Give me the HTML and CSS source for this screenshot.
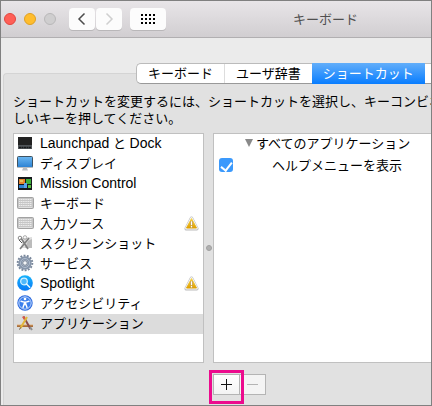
FILE: index.html
```html
<!DOCTYPE html>
<html lang="ja">
<head>
<meta charset="utf-8">
<title>キーボード</title>
<link rel="stylesheet" href="styles.css">
</head>
<body>
<svg class="defs" aria-hidden="true">
  <defs>
    <linearGradient id="blue" x2="0" y2="1"><stop stop-color="#6cb8f2"/><stop offset="1" stop-color="#2980d2"/></linearGradient>
    <linearGradient id="spot" x2="0" y2="1"><stop stop-color="#18b4fc"/><stop offset="1" stop-color="#0878f4"/></linearGradient>
    <linearGradient id="gold" x2="0" y2="1"><stop stop-color="#f8d548"/><stop offset="1" stop-color="#dfa000"/></linearGradient>
    <symbol id="keys" viewBox="0 0 18 18">
      <rect x="1.500" y="3.500" width="16" height="11" rx="1" fill="#c6c6c6" stroke="#a2a2a2"/>
      <path d="M3 5.500h13M3 7.500h13M3 9.500h13M3 11.500h13" stroke="#ececec" stroke-dasharray="1.300 .5"/>
      <path d="M3 13.500h13" stroke="#dedede"/>
    </symbol>
    <symbol id="warning" viewBox="0 0 16 16">
      <path d="M8 2.700L13.500 13.500h-11z" fill="#bbb" stroke="#bbb" stroke-width="4" stroke-linejoin="round"/>
      <path d="M8 2.700L13.300 13H2.700z" fill="#f4f4f4" stroke="#f4f4f4" stroke-width="3" stroke-linejoin="round"/>
      <path d="M8 2.700L13.300 12.800H2.700z" fill="url(#gold)" stroke="url(#gold)" stroke-linejoin="round"/>
      <path d="M8 5.500v4M8 10.500v1.700" stroke="#ad7500" stroke-width="3"/>
      <path d="M8 5.500v4M8 10.500v1.700" stroke="#fff" stroke-width="1.800"/>
    </symbol>
  </defs>
</svg>
<div class="window">
  <header class="titlebar">
    <div class="lights">
      <button class="light close" aria-label="閉じる"></button>
      <button class="light minimize" aria-label="しまう"></button>
      <button class="light" aria-label="拡大" disabled></button>
    </div>
    <nav class="history">
      <button class="tool" aria-label="戻る"><svg width="10" height="14" viewBox="0 0 10 14"><path d="M7.500 1.500L2 7l5.500 5.500" fill="none" stroke="#4c4c4c" stroke-width="1.500"/></svg></button>
      <button class="tool" aria-label="進む" disabled><svg width="10" height="14" viewBox="0 0 10 14"><path d="M2.500 1.500L8 7l-5.500 5.500" fill="none" stroke="#cfcfcf" stroke-width="1.500"/></svg></button>
    </nav>
    <button class="tool all" aria-label="すべてを表示"><svg width="14" height="10" viewBox="0 0 14 10"><path d="M0 1h14M0 5h14M0 9h14" stroke="#000" stroke-width="2" stroke-dasharray="2 2"/></svg></button>
    <h1 class="title">キーボード</h1>
  </header>
  <main class="content">
    <div class="tabs" role="tablist">
      <button class="tab" role="tab">キーボード</button>
      <button class="tab" role="tab">ユーザ辞書</button>
      <button class="tab selected" role="tab" aria-selected="true">ショートカット</button>
      <button class="tab rest" role="tab" aria-label="入力ソース"></button>
    </div>
    <section class="panel">
      <p class="intro">ショートカットを変更するには、ショートカットを選択し、キーコンビネ<br>しいキーを押してください。</p>
      <div class="split">
        <ul class="list categories">
          <li><button class="row">
            <svg class="icon" viewBox="0 0 18 18"><path d="M2 3h14v9H2z" fill="#222"/><path d="M2 11h14v4H2z" fill="#505458"/><path d="M3 13.500h12" stroke="#17191b" stroke-width="1.500" stroke-dasharray="2 .5"/></svg>
            <span><span class="latin">Launchpad</span> と <span class="latin">Dock</span></span></button></li>
          <li><button class="row">
            <svg class="icon" viewBox="0 0 18 18"><path d="M7 14h4l1 2.500H6z" fill="#b9bdc1"/><rect x="1.500" y="2.500" width="15" height="11" rx="1" fill="url(#blue)" stroke="#3f5361"/><path d="M2 13.500h14" stroke="#b9bdc1"/></svg>
            <span>ディスプレイ</span></button></li>
          <li><button class="row">
            <svg class="icon" viewBox="0 0 18 18"><path d="M2 3h14v13H2z" fill="#15191d"/><path d="M3 5h6v5H3z" fill="#e68430"/><path d="M4 6h3v2H4z" fill="#e6c05d"/><path d="M10 5h5v5h-5z" fill="#3cae39"/><path d="M3 11h5v3H3z" fill="#2e83d4"/><path d="M8 9h3v5H8z" fill="#58a5ed"/><path d="M12 11h3v3h-3z" fill="#58c13f"/></svg>
            <span class="latin">Mission Control</span></button></li>
          <li><button class="row"><svg class="icon"><use href="#keys"/></svg><span>キーボード</span></button></li>
          <li><button class="row"><svg class="icon"><use href="#keys"/></svg><span>入力ソース</span><svg class="alert" role="img" aria-label="警告"><use href="#warning"/></svg></button></li>
          <li><button class="row">
            <svg class="icon" viewBox="0 0 18 18"><path d="M7 4l9-1v11H5z" fill="#dedede"/><path d="M12 7l4-2v9H9z" fill="#bcbcbc"/><path d="M4 15L13 4M12 15L5 4" stroke="#808080" stroke-width="1.700"/><circle cx="4" cy="4" r="1.800" fill="none" stroke="#888"/><circle cx="9" cy="3.500" r="1.800" fill="none" stroke="#aaa"/><path d="M3 6l3 3" stroke="#555"/></svg>
            <span>スクリーンショット</span></button></li>
          <li><button class="row">
            <svg class="icon" viewBox="0 0 18 18"><circle cx="9" cy="9" r="7.300" fill="none" stroke="#78869a" stroke-width="2" stroke-dasharray="1.900 1.375"/><circle cx="9" cy="9" r="4.700" fill="none" stroke="#8695aa" stroke-width="4"/><circle cx="9" cy="9" r="4.500" fill="none" stroke="#b0bdce"/><circle cx="9" cy="9" r="2.300" fill="#f4f6f8" stroke="#6c7b90"/></svg>
            <span>サービス</span></button></li>
          <li><button class="row">
            <svg class="icon" viewBox="0 0 18 18"><circle cx="9" cy="9" r="7.800" fill="url(#spot)"/><circle cx="8" cy="7.500" r="3.300" fill="#4fb8fb" stroke="#d5f2ff" stroke-width="1.200"/><path d="M10.500 10l3.200 3.300" stroke="#e7f8ff" stroke-width="1.500" stroke-linecap="round"/></svg>
            <span class="latin">Spotlight</span><svg class="alert" role="img" aria-label="警告"><use href="#warning"/></svg></button></li>
          <li><button class="row">
            <svg class="icon" viewBox="0 0 18 18"><circle cx="9" cy="9" r="7.700" fill="#2867dd"/><circle cx="9" cy="9" r="6.200" fill="#3c80ec" stroke="#c5dcff"/><circle cx="9" cy="5" r="1.300" fill="#fff"/><path d="M5 7.300l3 .8h2l3-.8M9 8v2.500M8.300 9.500L7 13.500M9.700 9.500L11 13.500" fill="none" stroke="#fff" stroke-width="1.400" stroke-linecap="round"/></svg>
            <span>アクセシビリティ</span></button></li>
          <li><button class="row current" aria-current="true">
            <svg class="icon" viewBox="0 0 18 18"><path d="M1 11h16v2H1z" fill="#a86d39"/><path d="M1 11h16" stroke="#dfaa70" stroke-width=".8"/><path d="M7.500 2.500L14.500 15" stroke="#8a4d4a" stroke-width="2"/><path d="M7 2.500l2.500 4" stroke="#d65949" stroke-width="2"/><path d="M11 3L4.500 14" stroke="#e2b73c" stroke-width="2"/><path d="M4.700 13.500l-1.200 2" stroke="#695035"/><path d="M14 13l2 3" stroke="#909090" stroke-width="2"/></svg>
            <span>アプリケーション</span></button></li>
        </ul>
        <div class="divider"><span class="knob"></span></div>
        <div class="list shortcuts">
          <div class="group"><svg width="8" height="8" viewBox="0 0 8 8"><path d="M0 0h8L4 8z" fill="#898989"/></svg><span>すべてのアプリケーション</span></div>
          <label class="shortcut"><input class="check" type="checkbox" checked><span>ヘルプメニューを表示</span></label>
        </div>
      </div>
      <div class="actions">
        <span class="highlight"><button class="action" aria-label="追加"><svg width="11" height="11" viewBox="0 0 11 11"><path d="M0 5.500h11M5.500 0v11" stroke="#111"/></svg></button></span>
        <button class="action remove" aria-label="削除" disabled><svg width="11" height="11" viewBox="0 0 11 11"><path d="M0 5.500h11" stroke="#b4b4b4"/></svg></button>
      </div>
    </section>
  </main>
</div>
</body>
</html>
```
FILE: styles.css
```css
* {
  box-sizing: border-box;
}

body {
  margin: 0;
  font: 13px/17px "Liberation Sans", "Noto Sans CJK JP", sans-serif;
  color: #000;
}

button {
  margin: 0;
  padding: 0;
  border: 0;
  font: inherit;
  color: inherit;
}

svg {
  display: block;
  flex: none;
}

.defs {
  position: absolute;
  width: 0;
  height: 0;
}

.window {
  display: flex;
  flex-direction: column;
  min-height: 100vh;
  border: 1px solid #808080;
  background: #ebebeb;
  overflow: hidden;
}

.titlebar {
  display: flex;
  align-items: center;
  height: 37px;
  padding-left: 3px;
  border-bottom: 1px solid #b1afb1;
  background: linear-gradient(#e8e5e8, #d1ced1);
}

.lights {
  display: flex;
  gap: 8px;
}

.light {
  width: 12px;
  height: 12px;
  border: 1px solid #b9b8b9;
  border-radius: 50%;
  background: #cfcecf;
}

.close {
  border-color: #e2463f;
  background: #ff5f57;
}

.minimize {
  border-color: #dfa023;
  background: #ffbd2e;
}

.history {
  display: flex;
  gap: 1px;
  margin-left: 13px;
}

.tool {
  display: flex;
  align-items: center;
  justify-content: center;
  width: 26px;
  height: 22px;
  border-radius: 4px;
  background: #fcfcfc;
  box-shadow: 0 1px 0 #b9b7b9;
}

.all {
  width: 36px;
  margin-left: 8px;
}

.title {
  margin: 0 0 0 127px;
  font-size: 13px;
  font-weight: 400;
  color: #505050;
  white-space: nowrap;
}

.content {
  display: flex;
  flex: 1;
  flex-direction: column;
  padding: 25px 0 0 2px;
}

.tabs {
  position: relative;
  z-index: 1;
  display: flex;
  height: 21px;
  margin: 0 0 -11px 133px;
  border: 1px solid #bbb;
  border-right: 0;
  border-bottom-color: #999;
  border-radius: 5px 0 0 5px;
  background: #fff;
}

.tab {
  padding: 0 11px;
  border-right: 1px solid #ddd;
  background: transparent;
  white-space: nowrap;
}

.tab.selected {
  margin: -1px 0 -1px -1px;
  border: 0;
  background: linear-gradient(#62aefa, #087dff);
  color: #fff;
}

.tab.rest {
  flex: 1;
  padding: 0;
  border: 0;
}

.panel {
  flex: 1;
  padding: 19px 0 8px 9px;
  border: 1px solid #d4d4d4;
  border-width: 1px 0 0 1px;
  border-radius: 4px 0 0 0;
  background: #e1e1e1;
}

.intro {
  margin: 0 0 6px;
  white-space: nowrap;
}

.split {
  display: flex;
}

.list {
  margin: 0;
  padding: 0;
  border: 1px solid #c0c0c0;
  background: #fff;
}

.categories {
  width: 191px;
  padding-bottom: 28px;
  list-style: none;
}

.row {
  display: flex;
  align-items: center;
  gap: 6px;
  width: 100%;
  height: 20px;
  padding: 0 4px 2px 2px;
  background: transparent;
  text-align: left;
  white-space: nowrap;
}

.row.current {
  background: #dcdcdc;
}

.latin {
  font-size: 14px;
}

.icon {
  width: 18px;
  height: 18px;
}

.alert {
  width: 15px;
  height: 15px;
  margin-left: auto;
}

.divider {
  display: flex;
  align-items: center;
  justify-content: center;
  width: 9px;
}

.knob {
  width: 6px;
  height: 6px;
  border: 1px solid #a0a0a0;
  border-radius: 50%;
  background: #b0b0b0;
}

.shortcuts {
  flex: 1;
  border-right: 0;
}

.group {
  display: flex;
  align-items: center;
  gap: 3px;
  height: 20px;
  padding: 0 0 2px 31px;
  white-space: nowrap;
}

.shortcut {
  display: flex;
  align-items: center;
  gap: 39px;
  height: 22px;
  padding-left: 5px;
  white-space: nowrap;
}

.check {
  appearance: none;
  display: flex;
  justify-content: center;
  width: 14px;
  height: 14px;
  margin: 0;
  border-radius: 3px;
  background: #3b99fc;
}

.check:checked::before {
  content: "";
  width: 5px;
  height: 9px;
  margin-top: 2px;
  border: solid #fff;
  border-width: 0 2px 2px 0;
  transform: rotate(38deg);
}

.actions {
  display: flex;
  margin: 11px 0 0 200px;
}

.action {
  display: flex;
  align-items: center;
  justify-content: center;
  width: 27px;
  height: 21px;
  border: 1px solid #b4b4b4;
  background: linear-gradient(#fff, #f3f3f3);
}

.action.remove {
  border-left: 0;
  width: 26px;
  background: #f4f4f4;
}

.highlight {
  position: relative;
}

.highlight::after {
  content: "";
  position: absolute;
  inset: -4px -4px -9px;
  border: 3px solid #ec0b8d;
  pointer-events: none;
}
```
